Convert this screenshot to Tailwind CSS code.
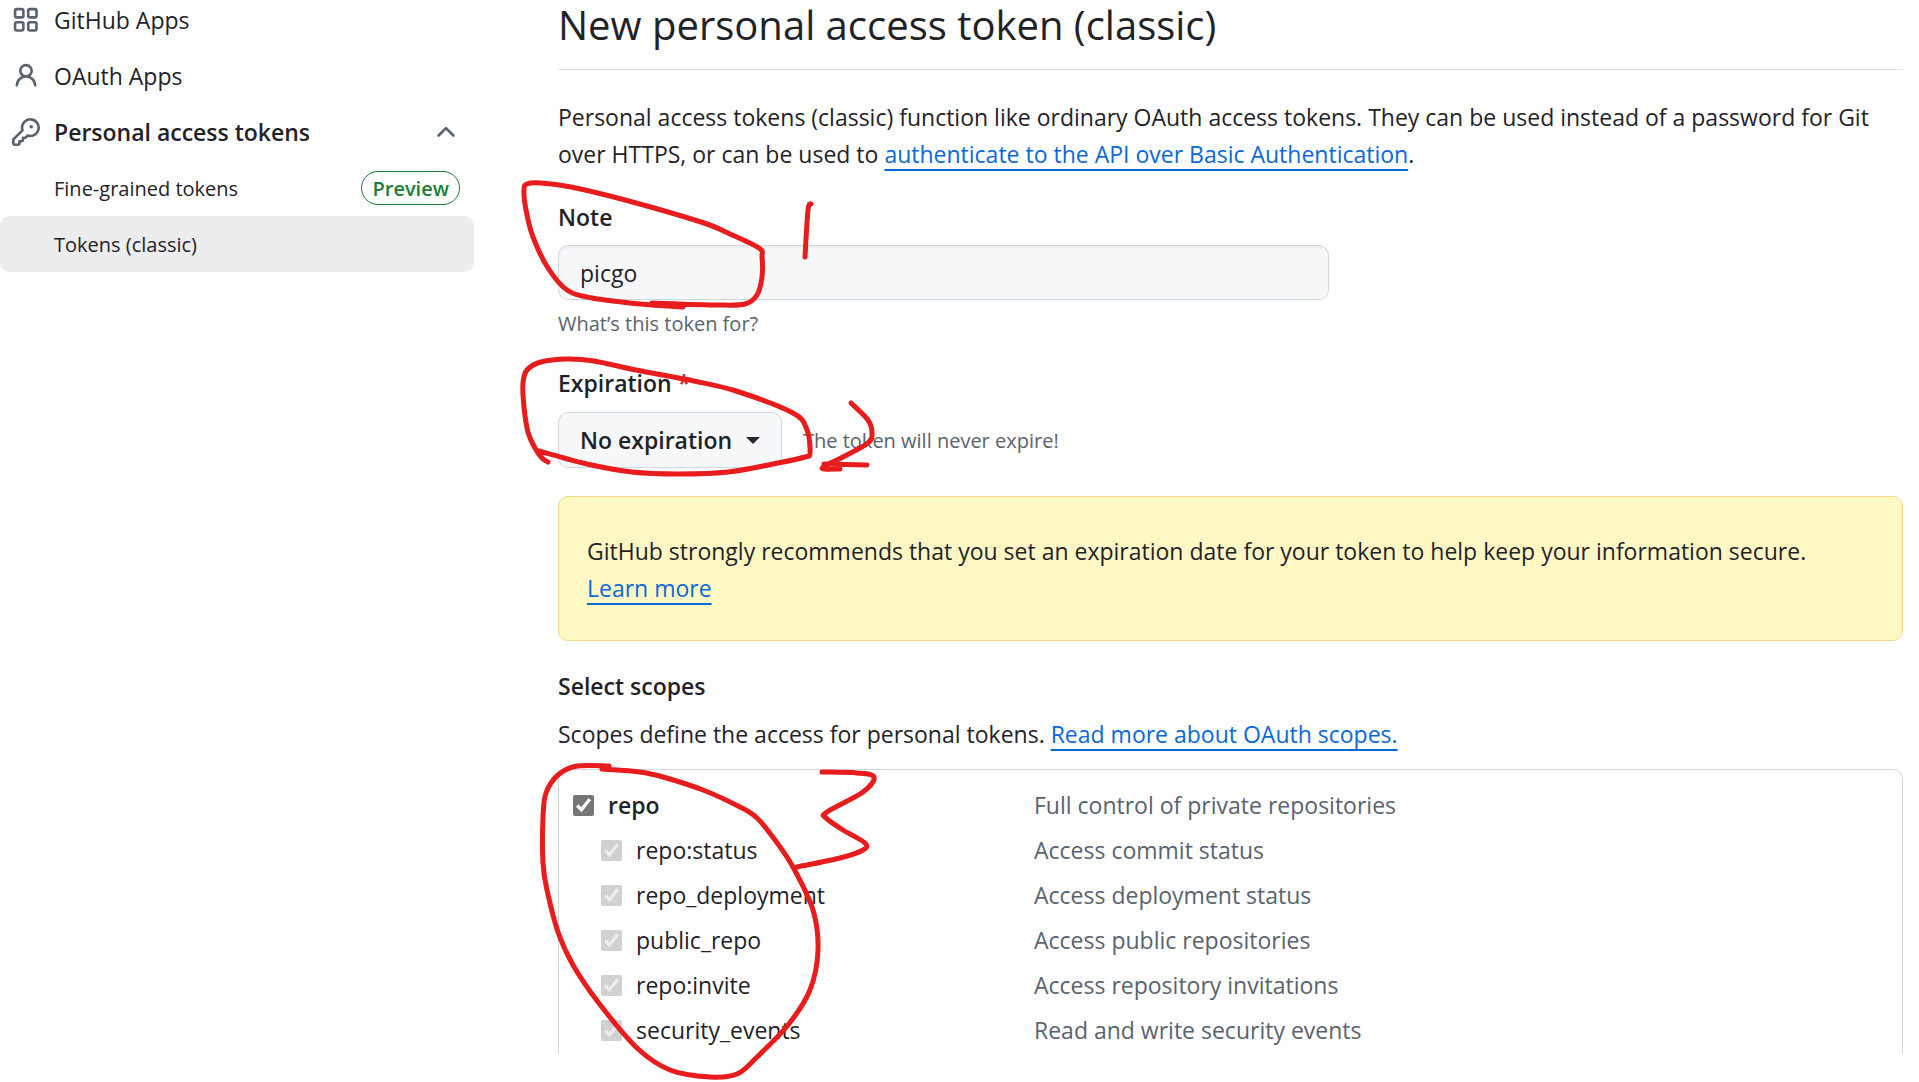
<!DOCTYPE html>
<html lang="en">
<head>
    <meta charset="utf-8">
    <title>New personal access token (classic)</title>
    <script src="https://cdn.jsdelivr.net/npm/@tailwindcss/browser@4"></script>
</head>
<body class="relative min-h-screen bg-white font-['Open_Sans','Noto_Sans',sans-serif] text-[23px] leading-[37px] text-[#1f2328] overflow-hidden">

    <div class="flex">
        <nav class="w-[474px] shrink-0">
            <ul class="-mt-2">
                <li>
                    <a href="#" class="flex h-14 items-center gap-3.5 pl-3">
                        <svg class="size-7 text-[#59636e]" viewBox="0 0 16 16" fill="none" stroke="currentColor" stroke-width="1.5">
                            <rect x="1.75" y="1.75" width="4.75" height="4.75" rx="1"/>
                            <rect x="9.25" y="1.75" width="4.75" height="4.75" rx="1"/>
                            <rect x="1.75" y="9.25" width="4.75" height="4.75" rx="1"/>
                            <rect x="9.25" y="9.25" width="4.75" height="4.75" rx="1"/>
                        </svg>
                        GitHub Apps
                    </a>
                </li>
                <li>
                    <a href="#" class="flex h-14 items-center gap-3.5 pl-3">
                        <svg class="size-7 fill-[#59636e]" viewBox="0 0 16 16"><path d="M10.561 8.073a6.005 6.005 0 0 1 3.432 5.142.75.75 0 1 1-1.498.07 4.5 4.5 0 0 0-8.99 0 .75.75 0 0 1-1.498-.07 6.004 6.004 0 0 1 3.431-5.142 3.999 3.999 0 1 1 5.123 0ZM10.5 5a2.5 2.5 0 1 0-5 0 2.5 2.5 0 0 0 5 0Z"/></svg>
                        OAuth Apps
                    </a>
                </li>
                <li>
                    <button type="button" class="flex h-14 w-full items-center gap-3.5 pl-3 pr-3.5 font-semibold">
                        <svg class="size-7 fill-[#59636e]" viewBox="0 0 16 16"><path d="M10.5 0a5.499 5.499 0 1 1-1.288 10.848l-.932.932a.749.749 0 0 1-.53.22H7v.75a.749.749 0 0 1-.22.53l-.5.5a.749.749 0 0 1-.53.22H5v.75a.749.749 0 0 1-.22.53l-.5.5a.749.749 0 0 1-.53.22h-2A1.75 1.75 0 0 1 0 14.25v-2c0-.199.079-.389.22-.53l4.932-4.932A5.5 5.5 0 0 1 10.5 0Zm-4 5.5c-.001.431.069.86.205 1.269a.75.75 0 0 1-.181.768L1.5 12.56v1.69c0 .138.112.25.25.25h1.69l.06-.06v-1.19a.75.75 0 0 1 .75-.75h1.19l.06-.06v-1.19a.75.75 0 0 1 .75-.75h1.19l1.023-1.025a.75.75 0 0 1 .768-.18A4 4 0 1 0 6.5 5.5ZM11 6a1 1 0 1 1 0-2 1 1 0 0 1 0 2Z"/></svg>
                        Personal access tokens
                        <svg class="ml-auto size-7 fill-[#59636e]" viewBox="0 0 16 16"><path d="M3.22 10.53a.749.749 0 0 1 0-1.06l4.25-4.25a.749.749 0 0 1 1.06 0l4.25 4.25a.749.749 0 1 1-1.06 1.06L8 6.811 4.28 10.53a.749.749 0 0 1-1.06 0Z"/></svg>
                    </button>
                    <ul class="text-[20px]">
                        <li>
                            <a href="#" class="flex h-14 items-center justify-between pl-[54px] pr-3.5">
                                Fine-grained tokens
                                <span class="flex h-[34px] items-center rounded-full border border-[#1a7f37] px-2.5 font-semibold text-[#1a7f37]">Preview</span>
                            </a>
                        </li>
                        <li>
                            <a href="#" aria-current="page" class="flex h-14 items-center rounded-[10px] bg-[#ecedef] pl-[54px]">Tokens (classic)</a>
                        </li>
                    </ul>
                </li>
            </ul>
        </nav>

        <main class="ml-[84px] mr-4 flex-1">
            <h1 class="h-[70px] border-b border-[#dfe2e6] text-[40px] leading-[50px]">New personal access token (classic)</h1>

            <form>
                <p class="mt-[29px]">
                    Personal access tokens (classic) function like ordinary OAuth access tokens. They can be used instead of a password for Git
                    over HTTPS, or can be used to <a href="#" class="text-[#0969da] underline decoration-2 underline-offset-[6px]">authenticate to the API over Basic Authentication</a>.
                </p>

                <label for="note" class="mt-[26px] block font-semibold">Note</label>
                <input id="note" type="text" value="picgo" class="mt-[9px] block h-[55px] w-[771px] rounded-[10px] border border-[#d1d9e0] bg-[#f6f8fa] px-[21px] shadow-[inset_0_2px_0_rgba(31,35,40,0.04)]">
                <p class="mt-[5px] text-[20px] text-[#59636e]">What’s this token for?</p>

                <label for="expiration" class="mt-[23px] block font-semibold">Expiration <span class="text-[#d1242f]">*</span></label>
                <div class="mt-2.5 flex items-center gap-[21px]">
                    <div class="relative">
                        <select id="expiration" class="h-14 w-[224px] appearance-none rounded-[10px] border border-[#d1d9e0] bg-[#f6f8fa] pl-[21px] font-semibold">
                            <option>No expiration</option>
                        </select>
                        <svg class="pointer-events-none absolute right-[22px] top-[25px] h-[7px] w-3.5 fill-[#25292e]" viewBox="0 0 14 7"><path d="M0 0h14L7 7Z"/></svg>
                    </div>
                    <span class="text-[20px] text-[#59636e]">The token will never expire!</span>
                </div>

                <div class="mt-7 rounded-[10px] border border-[#eed888] bg-[#fff8c5] px-7 pb-[33px] pt-9">
                    GitHub strongly recommends that you set an expiration date for your token to help keep your information secure.<br>
                    <a href="#" class="text-[#0969da] underline decoration-2 underline-offset-[6px]">Learn more</a>
                </div>

                <h2 class="mt-[27px] font-semibold">Select scopes</h2>
                <p class="mt-[11px]">
                    Scopes define the access for personal tokens.
                    <a href="#" class="text-[#0969da] underline decoration-2 underline-offset-[6px]">Read more about OAuth scopes.</a>
                </p>

                <ul class="mt-4 rounded-t-[10px] border border-b-0 border-[#d1d9e0] px-3.5 pt-[13px]">
                    <li class="grid h-[45px] grid-cols-[461px_1fr] items-center">
                        <label class="flex items-center gap-3.5 font-semibold"><input type="checkbox" checked class="size-[21px] accent-[#767676]">repo</label>
                        <span class="text-[#59636e]">Full control of private repositories</span>
                    </li>
                    <li class="grid h-[45px] grid-cols-[461px_1fr] items-center">
                        <label class="flex items-center gap-3.5 pl-7"><input type="checkbox" checked disabled class="size-[21px]">repo:status</label>
                        <span class="text-[#59636e]">Access commit status</span>
                    </li>
                    <li class="grid h-[45px] grid-cols-[461px_1fr] items-center">
                        <label class="flex items-center gap-3.5 pl-7"><input type="checkbox" checked disabled class="size-[21px]">repo_deployment</label>
                        <span class="text-[#59636e]">Access deployment status</span>
                    </li>
                    <li class="grid h-[45px] grid-cols-[461px_1fr] items-center">
                        <label class="flex items-center gap-3.5 pl-7"><input type="checkbox" checked disabled class="size-[21px]">public_repo</label>
                        <span class="text-[#59636e]">Access public repositories</span>
                    </li>
                    <li class="grid h-[45px] grid-cols-[461px_1fr] items-center">
                        <label class="flex items-center gap-3.5 pl-7"><input type="checkbox" checked disabled class="size-[21px]">repo:invite</label>
                        <span class="text-[#59636e]">Access repository invitations</span>
                    </li>
                    <li class="grid h-[45px] grid-cols-[461px_1fr] items-center">
                        <label class="flex items-center gap-3.5 pl-7"><input type="checkbox" checked disabled class="size-[21px]">security_events</label>
                        <span class="text-[#59636e]">Read and write security events</span>
                    </li>
                </ul>
            </form>
        </main>
    </div>

    <!-- red pen marks -->
    <svg id="marks" class="pointer-events-none absolute left-0 top-0 h-[1082px] w-[1919px] fill-none stroke-[#e81c1c] stroke-5" stroke-linecap="round" stroke-linejoin="round"></svg>

    <script type="text/javascript">
    var strokes = [
        // note circle
        [[683,307],[640,304],[592,298],[567,290],[548,268],[533,237],[526,210],[524,190],[527,184],[541,183],[571,187],[625,200],[701,222],[728,233],[759,248],[762,257],[762,277],[757,295],[745,304],[717,305],[652,303]],
        // 1
        [[811,204],[808,210],[805,257]],
        // expiration circle
        [[548,462],[542,458],[535,448],[528,432],[524,407],[523,383],[527,370],[541,362],[567,359],[594,361],[636,370],[694,381],[736,391],[793,413],[807,430],[810,453],[805,457],[778,463],[728,472],[678,474],[632,472],[587,464],[539,451]],
        // 2
        [[851,403],[868,420],[872,433],[868,443],[843,457],[822,468],[840,469]],
        [[824,464],[867,465]],
        // scopes circle
        [[609,766],[577,766],[558,775],[546,793],[543,817],[543,863],[547,890],[558,932],[573,965],[598,1002],[637,1048],[670,1070],[710,1077],[737,1074],[757,1057],[788,1025],[810,990],[818,950],[813,910],[793,867],[775,840],[757,818],[740,807],[703,790],[663,777],[640,772],[602,769]],
        // 3
        [[822,772],[857,773],[874,777],[863,792],[827,812],[826,818],[843,830],[865,843],[863,850],[840,858],[797,867]]
    ];

    // smooth curve through the points
    function toPath(p) {
        var d = `M${p[0]}`;
        for( let i=0; i<p.length-1; i++ ) {
            var a = p[i-1] || p[i], b = p[i], c = p[i+1], e = p[i+2] || c;
            d += `C${b[0]+(c[0]-a[0])/6},${b[1]+(c[1]-a[1])/6} ${c[0]-(e[0]-b[0])/6},${c[1]-(e[1]-b[1])/6} ${c}`;
        }
        return d;
    }

    document.getElementById("marks").innerHTML = strokes.map(s => `<path d="${toPath(s)}"/>`).join('');
    </script>
</body>
</html>
